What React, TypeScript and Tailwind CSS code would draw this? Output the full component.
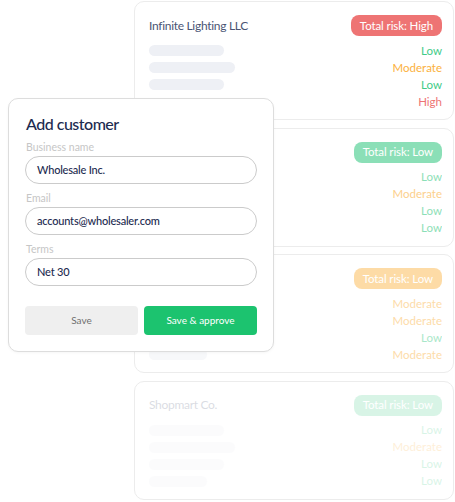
import React from "react";

type Risk = "Low" | "Moderate" | "High";

const riskText: Record<Risk, string> = {
  Low: "text-[#3fcb88]",
  Moderate: "text-[#fbb13c]",
  High: "text-[#ee7474]",
};

const badgeBg: Record<Risk, string> = {
  Low: "bg-[#3fcb88]",
  Moderate: "bg-[#fbb13c]",
  High: "bg-[#ee7474]",
};

const barWidths = ["w-[75px]", "w-[86px]", "w-[75px]", "w-[58px]"];

function RiskCard({
  name,
  total,
  tone,
  rows,
  bars = 4,
  fade,
}: {
  name: string;
  total: Risk;
  tone: Risk;
  rows: Risk[];
  bars?: number;
  fade: string;
}) {
  return (
    <div className="h-[119px] rounded-[10px] border border-[#ececec] bg-white pl-[13px] pr-[11px] pt-[13px]">
      <div className={fade}>
        <div className="flex h-[21px] items-center justify-between">
          <span className="pl-px text-[12px] tracking-[-0.3px] text-[#4a5574]">{name}</span>
          <span
            className={`flex h-[21px] items-center rounded-[8px] px-[9px] text-[11.5px] tracking-[-0.1px] text-white ${badgeBg[tone]}`}
          >
            Total risk: {total}
          </span>
        </div>
        <div className="mt-[6px] flex flex-col">
          {rows.map((r, i) => (
            <div key={i} className="flex h-[17px] items-center justify-between">
              {i < bars ? (
                <div className={`ml-px h-[11px] rounded-full bg-[#eef0f5] ${barWidths[i]}`} />
              ) : (
                <div />
              )}
              <span className={`text-[11.5px] ${riskText[r]}`}>{r}</span>
            </div>
          ))}
        </div>
      </div>
    </div>
  );
}

function Field({ label, value }: { label: string; value: string }) {
  return (
    <div className="flex flex-col">
      <span className="h-[13px] pl-px text-[10.5px] leading-[13px] text-[#c6c6c6]">{label}</span>
      <div className="mt-[2px] flex h-[28px] items-center rounded-full border border-[#cbcbcb] px-[11px] text-[11px] font-medium tracking-[-0.2px] text-[#1d2b50]">
        {value}
      </div>
    </div>
  );
}

export default function App() {
  return (
    <div
      className="relative h-[502px] w-[455px] overflow-hidden bg-white"
      style={{ fontFamily: "Lato, 'Noto Sans', sans-serif" }}
    >
      <div className="ml-[134px] mt-px flex w-[320px] flex-col gap-[7.5px]">
        <RiskCard
          name="Infinite Lighting LLC"
          total="High"
          tone="High"
          rows={["Low", "Moderate", "Low", "High"]}
          bars={3}
          fade="opacity-100"
        />
        <RiskCard
          name="Bright Supply Co."
          total="Low"
          tone="Low"
          rows={["Low", "Moderate", "Low", "Low"]}
          fade="opacity-60"
        />
        <RiskCard
          name="Northwind Traders"
          total="Low"
          tone="Moderate"
          rows={["Moderate", "Moderate", "Low", "Moderate"]}
          fade="opacity-45"
        />
        <RiskCard
          name="Shopmart Co."
          total="Low"
          tone="Low"
          rows={["Low", "Moderate", "Low", "Low"]}
          fade="opacity-20"
        />
      </div>

      <div className="absolute left-[8px] top-[98px] flex h-[254px] w-[266px] flex-col rounded-[10px] border border-[#dddddd] bg-white px-[16px] pt-[15px] shadow-[0_1px_3px_rgba(0,0,0,0.04)]">
        <h2 className="h-[21px] pl-px text-[16px] font-medium leading-[20px] tracking-[-0.5px] text-[#1d2b50]">
          Add customer
        </h2>
        <div className="mt-[6px] flex flex-col gap-[8px]">
          <Field label="Business name" value="Wholesale Inc." />
          <Field label="Email" value="accounts@wholesaler.com" />
          <Field label="Terms" value="Net 30" />
        </div>
        <div className="mt-[20px] flex gap-[6px]">
          <button className="flex h-[29px] flex-1 items-center justify-center rounded-[4px] bg-[#efefef] text-[10px] text-[#6f6f6f]">
            Save
          </button>
          <button className="flex h-[29px] flex-1 items-center justify-center rounded-[4px] bg-[#1cc36f] text-[10px] text-white">
            Save &amp; approve
          </button>
        </div>
      </div>
    </div>
  );
}
